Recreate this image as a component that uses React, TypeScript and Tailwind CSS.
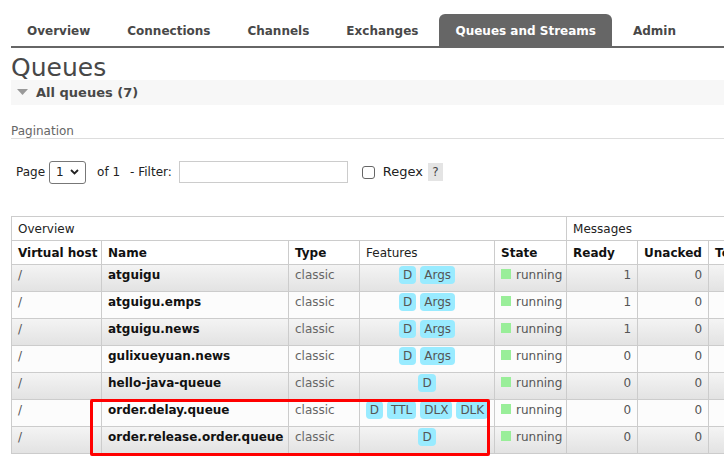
import React from "react";

const tabs = ["Overview", "Connections", "Channels", "Exchanges", "Queues and Streams", "Admin"];

type Row = { name: string; features: string[]; ready: number };
const rows: Row[] = [
  { name: "atguigu", features: ["D", "Args"], ready: 1 },
  { name: "atguigu.emps", features: ["D", "Args"], ready: 1 },
  { name: "atguigu.news", features: ["D", "Args"], ready: 1 },
  { name: "gulixueyuan.news", features: ["D", "Args"], ready: 0 },
  { name: "hello-java-queue", features: ["D"], ready: 0 },
  { name: "order.delay.queue", features: ["D", "TTL", "DLX", "DLK"], ready: 0 },
  { name: "order.release.order.queue", features: ["D"], ready: 0 },
];

export default function App() {
  return (
    <div
      className="w-[724px] h-[467px] overflow-hidden bg-white text-[#484848] text-[12px]"
      style={{ fontFamily: '"DejaVu Sans", Verdana, sans-serif' }}
    >
      {/* Tabs */}
      <div className="pt-[14px] pl-[11px]">
        <div className="flex gap-[5px] border-b-2 border-[#666] h-[34px]">
          {tabs.map((t) => (
            <div
              key={t}
              className={
                "px-4 h-[32px] flex items-center pt-[1px] font-bold text-[12px] rounded-t-[6px] " +
                (t === "Queues and Streams" ? "bg-[#666] text-white" : "text-[#484848]")
              }
            >
              {t}
            </div>
          ))}
        </div>
      </div>

      <div className="pl-[11px]">
        <h1 className="text-[25px] h-[32px] pt-[5px] leading-[30px] text-[#484848] font-normal">Queues</h1>
        <div className="bg-[#f7f7f7] h-[25px] flex items-center pl-[6px] gap-[8px]">
          <svg width="11" height="7" viewBox="0 0 11 7">
            <polygon points="0,0 11,0 5.5,6" fill="#999" />
          </svg>
          <span className="font-bold text-[13px] text-[#484848]">All queues (7)</span>
        </div>

        <div className="mt-[17px] text-[12px] text-[#666] h-[17px] border-b border-[#ddd]">Pagination</div>

        <div className="mt-[21px] flex items-center h-[24px] text-[12px] text-[#222]">
          <span className="ml-[5px]">Page</span>
          <div className="ml-[4px] w-[37px] h-[23px] border border-[#777] rounded-[3px] flex items-center justify-between px-[6px]">
            <span>1</span>
            <svg width="9" height="6" viewBox="0 0 9 6">
              <polyline points="1,1 4.5,4.5 8,1" fill="none" stroke="#222" strokeWidth="1.8" />
            </svg>
          </div>
          <span className="ml-[11px]">of 1</span>
          <span className="ml-[10px]">- Filter:</span>
          <div className="ml-[7px] w-[169px] h-[22px] border border-[#ccc]" />
          <div className="ml-[14px] w-[13px] h-[13px] border border-[#666] rounded-[3px]" />
          <span className="ml-[8px] text-[13px]">Regex</span>
          <span className="ml-[5px] bg-[#e4e4e4] w-[15px] h-[18px] flex items-center justify-center text-[#444]">?</span>
        </div>

        <div className="mt-[32px] relative">
          <table className="border-collapse text-[12px] w-[820px] table-fixed">
            <colgroup>
              <col className="w-[90px]" />
              <col className="w-[187px]" />
              <col className="w-[71px]" />
              <col className="w-[135px]" />
              <col className="w-[72px]" />
              <col className="w-[71px]" />
              <col className="w-[71px]" />
              <col className="w-[123px]" />
            </colgroup>
            <thead>
              <tr className="h-[24px]">
                <th colSpan={5} className="border border-[#ccc] text-left font-normal px-[6px] text-[#222]">Overview</th>
                <th colSpan={3} className="border border-[#ccc] text-left font-normal px-[6px] text-[#222]">Messages</th>
              </tr>
              <tr className="h-[24px]">
                <th className="border border-[#ccc] text-left font-bold px-[6px] text-[#111] whitespace-nowrap">Virtual host</th>
                <th className="border border-[#ccc] text-left font-bold px-[6px] text-[#111]">Name</th>
                <th className="border border-[#ccc] text-left font-bold px-[6px] text-[#111]">Type</th>
                <th className="border border-[#ccc] text-left font-normal px-[6px] text-[#222]">Features</th>
                <th className="border border-[#ccc] text-left font-bold px-[6px] text-[#111]">State</th>
                <th className="border border-[#ccc] text-left font-bold px-[6px] text-[#111]">Ready</th>
                <th className="border border-[#ccc] text-left font-bold px-[6px] text-[#111]">Unacked</th>
                <th className="border border-[#ccc] text-left font-bold px-[6px] text-[#111] whitespace-nowrap">Total</th>
              </tr>
            </thead>
            <tbody>
              {rows.map((r, i) => (
                <tr
                  key={r.name}
                  className={
                    "h-[27px] " +
                    (i % 2 === 0 ? "bg-gradient-to-b from-[#f4f4f4] to-[#e2e2e2]" : "bg-[#fcfcfc]")
                  }
                >
                  <td className="border border-[#ccc] px-[6px] align-top pt-[1px] text-[#555]">/</td>
                  <td className="border border-[#ccc] px-[6px] align-top pt-[1px] font-bold text-[#111] whitespace-nowrap">{r.name}</td>
                  <td className="border border-[#ccc] px-[6px] align-top pt-[1px] text-[#666]">classic</td>
                  <td className="border border-[#ccc] px-[4px] align-top pt-[1px]">
                    <div className="flex justify-center gap-[4px]">
                      {r.features.map((f) => (
                        <span key={f} className="bg-[#99ebff] rounded-[4px] px-[4px] h-[18px] leading-[18px] text-[#555]">{f}</span>
                      ))}
                    </div>
                  </td>
                  <td className="border border-[#ccc] px-[6px] align-top pt-[1px] text-[#555] whitespace-nowrap">
                    <span className="inline-block w-[10px] h-[10px] bg-[#99ee99] mr-[5px]" />running
                  </td>
                  <td className="border border-[#ccc] px-[6px] align-top pt-[1px] text-right text-[#555]">{r.ready}</td>
                  <td className="border border-[#ccc] px-[6px] align-top pt-[1px] text-right text-[#555]">0</td>
                  <td className="border border-[#ccc] px-[6px] align-top pt-[1px] text-right text-[#555]">{r.ready}</td>
                </tr>
              ))}
            </tbody>
          </table>
          <div className="absolute left-[79px] top-[183px] w-[400px] h-[57px] border-[3px] border-[#f00] rounded-[2px] pointer-events-none" />
        </div>
      </div>
    </div>
  );
}
